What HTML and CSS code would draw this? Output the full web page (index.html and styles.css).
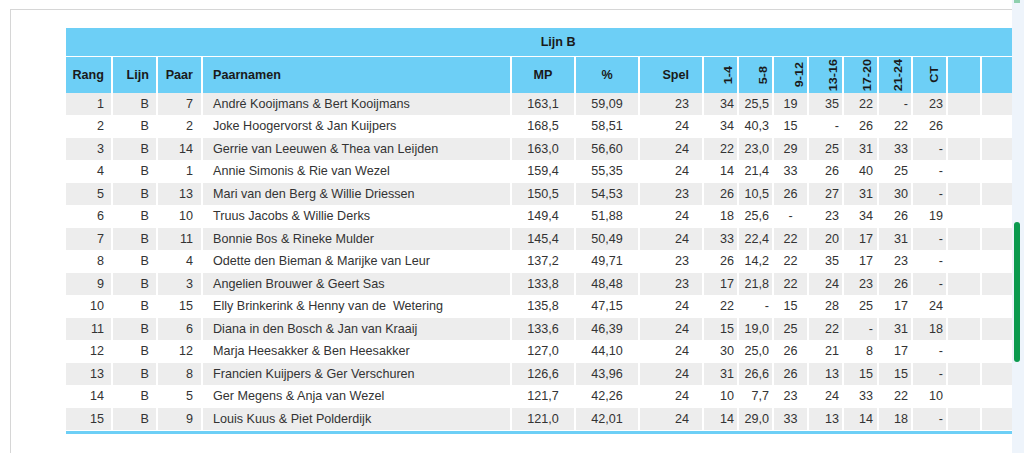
FILE: index.html
```html
<!DOCTYPE html>
<html lang="nl">
<head>
<meta charset="utf-8">
<title>Lijn B</title>
<link rel="stylesheet" href="styles.css">
</head>
<body>
<div class="main">
  <div class="frame">
    <table class="uitslag">
      <colgroup>
        <col class="w45"><col class="w45"><col class="w45"><col class="w309">
        <col class="w64"><col class="w64"><col class="w64">
        <col class="w35"><col class="w35"><col class="w35"><col class="w35"><col class="w35">
        <col class="w34"><col class="w35"><col class="w34"><col class="w70">
      </colgroup>
      <thead>
        <tr class="title"><th colspan="16">Lijn B</th></tr>
        <tr class="head">
          <th>Rang</th><th>Lijn</th><th>Paar</th><th>Paarnamen</th>
          <th>MP</th><th>%</th><th>Spel</th>
          <th><div class="vwrap"><span class="vert">1-4</span></div></th>
          <th><div class="vwrap"><span class="vert">5-8</span></div></th>
          <th><div class="vwrap"><span class="vert">9-12</span></div></th>
          <th><div class="vwrap"><span class="vert">13-16</span></div></th>
          <th><div class="vwrap"><span class="vert">17-20</span></div></th>
          <th><div class="vwrap"><span class="vert">21-24</span></div></th>
          <th><div class="vwrap"><span class="vert">CT</span></div></th>
          <th></th><th></th>
        </tr>
      </thead>
      <tbody>
        <tr><td>1</td><td>B</td><td>7</td><td>André Kooijmans &amp; Bert Kooijmans</td><td>163,1</td><td>59,09</td><td>23</td><td>34</td><td>25,5</td><td>19</td><td>35</td><td>22</td><td>-</td><td>23</td><td></td><td></td></tr>
        <tr><td>2</td><td>B</td><td>2</td><td>Joke Hoogervorst &amp; Jan Kuijpers</td><td>168,5</td><td>58,51</td><td>24</td><td>34</td><td>40,3</td><td>15</td><td>-</td><td>26</td><td>22</td><td>26</td><td></td><td></td></tr>
        <tr><td>3</td><td>B</td><td>14</td><td>Gerrie van Leeuwen &amp; Thea van Leijden</td><td>163,0</td><td>56,60</td><td>24</td><td>22</td><td>23,0</td><td>29</td><td>25</td><td>31</td><td>33</td><td>-</td><td></td><td></td></tr>
        <tr><td>4</td><td>B</td><td>1</td><td>Annie Simonis &amp; Rie van Wezel</td><td>159,4</td><td>55,35</td><td>24</td><td>14</td><td>21,4</td><td>33</td><td>26</td><td>40</td><td>25</td><td>-</td><td></td><td></td></tr>
        <tr><td>5</td><td>B</td><td>13</td><td>Mari van den Berg &amp; Willie Driessen</td><td>150,5</td><td>54,53</td><td>23</td><td>26</td><td>10,5</td><td>26</td><td>27</td><td>31</td><td>30</td><td>-</td><td></td><td></td></tr>
        <tr><td>6</td><td>B</td><td>10</td><td>Truus Jacobs &amp; Willie Derks</td><td>149,4</td><td>51,88</td><td>24</td><td>18</td><td>25,6</td><td>-</td><td>23</td><td>34</td><td>26</td><td>19</td><td></td><td></td></tr>
        <tr><td>7</td><td>B</td><td>11</td><td>Bonnie Bos &amp; Rineke Mulder</td><td>145,4</td><td>50,49</td><td>24</td><td>33</td><td>22,4</td><td>22</td><td>20</td><td>17</td><td>31</td><td>-</td><td></td><td></td></tr>
        <tr><td>8</td><td>B</td><td>4</td><td>Odette den Bieman &amp; Marijke van Leur</td><td>137,2</td><td>49,71</td><td>23</td><td>26</td><td>14,2</td><td>22</td><td>35</td><td>17</td><td>23</td><td>-</td><td></td><td></td></tr>
        <tr><td>9</td><td>B</td><td>3</td><td>Angelien Brouwer &amp; Geert Sas</td><td>133,8</td><td>48,48</td><td>23</td><td>17</td><td>21,8</td><td>22</td><td>24</td><td>23</td><td>26</td><td>-</td><td></td><td></td></tr>
        <tr><td>10</td><td>B</td><td>15</td><td>Elly Brinkerink &amp; Henny van de&nbsp; Wetering</td><td>135,8</td><td>47,15</td><td>24</td><td>22</td><td>-</td><td>15</td><td>28</td><td>25</td><td>17</td><td>24</td><td></td><td></td></tr>
        <tr><td>11</td><td>B</td><td>6</td><td>Diana in den Bosch &amp; Jan van Kraaij</td><td>133,6</td><td>46,39</td><td>24</td><td>15</td><td>19,0</td><td>25</td><td>22</td><td>-</td><td>31</td><td>18</td><td></td><td></td></tr>
        <tr><td>12</td><td>B</td><td>12</td><td>Marja Heesakker &amp; Ben Heesakker</td><td>127,0</td><td>44,10</td><td>24</td><td>30</td><td>25,0</td><td>26</td><td>21</td><td>8</td><td>17</td><td>-</td><td></td><td></td></tr>
        <tr><td>13</td><td>B</td><td>8</td><td>Francien Kuijpers &amp; Ger Verschuren</td><td>126,6</td><td>43,96</td><td>24</td><td>31</td><td>26,6</td><td>26</td><td>13</td><td>15</td><td>15</td><td>-</td><td></td><td></td></tr>
        <tr><td>14</td><td>B</td><td>5</td><td>Ger Megens &amp; Anja van Wezel</td><td>121,7</td><td>42,26</td><td>24</td><td>10</td><td>7,7</td><td>23</td><td>24</td><td>33</td><td>22</td><td>10</td><td></td><td></td></tr>
        <tr><td>15</td><td>B</td><td>9</td><td>Louis Kuus &amp; Piet Polderdijk</td><td>121,0</td><td>42,01</td><td>24</td><td>14</td><td>29,0</td><td>33</td><td>13</td><td>14</td><td>18</td><td>-</td><td></td><td></td></tr>
      </tbody>
      <tfoot>
        <tr class="foot"><td colspan="16"></td></tr>
      </tfoot>
    </table>
  </div>
</div>
<div class="scrollbar">
  <div class="scroll-top"></div>
  <div class="scroll-thumb"></div>
</div>
</body>
</html>
```

FILE: styles.css
```css
html, body {
  margin: 0;
  padding: 0;
  height: 453px;
  overflow: hidden;
  background: #ffffff;
}
body {
  display: flex;
  font-family: "Liberation Sans", Arial, sans-serif;
  font-size: 12.6px;
  color: #333333;
}
.main {
  flex: 1;
  min-width: 0;
  overflow: hidden;
  padding: 9px 0 0 10px;
  box-sizing: border-box;
  height: 453px;
}
.frame {
  border-top: 1px solid #d6d6d6;
  border-left: 1px solid #d6d6d6;
  height: 100%;
  box-sizing: border-box;
  padding: 18px 0 0 55px;
}
.uitslag {
  width: 984px;
  table-layout: fixed;
  border-collapse: separate;
  border-spacing: 0;
}
.w45 { width: 45px; }
.w309 { width: 309px; }
.w64 { width: 64px; }
.w35 { width: 35px; }
.w34 { width: 34px; }
.w70 { width: 70px; }

.uitslag th,
.uitslag td {
  padding: 0;
  white-space: nowrap;
  overflow: hidden;
  vertical-align: middle;
}
.title th {
  background: #6dcff6;
  height: 28px;
  border-bottom: 1px solid #ffffff;
  text-align: center;
  font-weight: bold;
  color: #1a1a1a;
}
.head th {
  background: #6dcff6;
  height: 35.6px;
  font-weight: bold;
  color: #1a1a1a;
  text-align: right;
}
.head th + th,
tbody td + td {
  border-left: 2px solid #ffffff;
}
tbody tr {
  height: 22.5px;
}
tbody tr:nth-child(odd) td {
  background: #ededed;
}
tbody td {
  text-align: right;
}

/* column alignment */
.uitslag tr > :nth-child(1) { padding-right: 7px; }
.uitslag tr > :nth-child(2) { padding-right: 7px; }
.uitslag tr > :nth-child(3) { padding-right: 8px; }
.uitslag tr > :nth-child(4) { text-align: left; padding-left: 10px; }
.uitslag tr > :nth-child(5),
.uitslag tr > :nth-child(6) { text-align: center; }
.uitslag tr > :nth-child(7) { padding-right: 13px; }
.uitslag tr > :nth-child(8),
.uitslag tr > :nth-child(9),
.uitslag tr > :nth-child(11),
.uitslag tr > :nth-child(13),
.uitslag tr > :nth-child(14) { padding-right: 3px; }
.uitslag tr > :nth-child(10) { text-align: center; }
.uitslag tr > :nth-child(12) { padding-right: 4px; }
.title th:nth-child(1) { padding: 0; text-align: center; }

/* rotated headers */
.vwrap {
  display: flex;
  justify-content: flex-end;
  align-items: center;
  height: 35px;
}
.head th:nth-child(8) .vwrap { padding-right: 0; }
.head th:nth-child(10) .vwrap { justify-content: flex-end; padding-right: 2px; }
.head th:nth-child(13) .vwrap { padding-right: 4px; }
.head th:nth-child(14) .vwrap { padding-right: 3px; }
.vert {
  display: inline-block;
  writing-mode: vertical-rl;
  transform: rotate(180deg) scaleX(0.8);
  line-height: 10px;
  font-size: 12.6px;
  font-weight: bold;
  color: #1a1a1a;
}

.foot td {
  height: 3px;
  padding: 0;
  background: #6dcff6;
  border-top: 1px solid #ffffff;
}

/* page scrollbar */
.scrollbar {
  width: 12px;
  flex: none;
  height: 453px;
  background: #eef4fb;
}
.scroll-top {
  width: 6px;
  height: 3px;
  margin-left: 2px;
  background: #8fd0ae;
}
.scroll-thumb {
  width: 6px;
  height: 140px;
  margin: 219px 0 0 2px;
  border-radius: 3px;
  background: #0b9a4e;
}
```
